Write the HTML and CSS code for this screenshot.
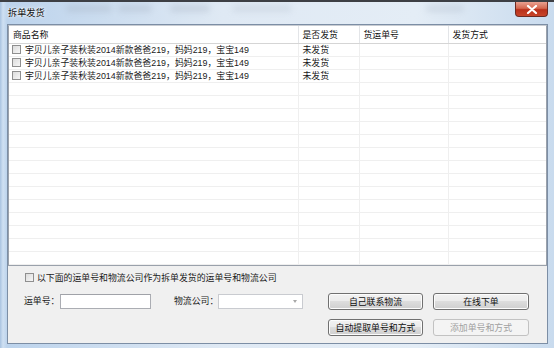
FILE: index.html
```html
<!DOCTYPE html>
<html lang="zh-CN">
<head>
    <meta charset="UTF-8">
    <title>拆单发货</title>
    <link rel="stylesheet" href="styles.css">
</head>
<body>

<div class="window">

    <!-- 标题栏 (Aero 玻璃) -->
    <div class="titlebar">
        <span class="smudge s1"></span>
        <span class="smudge s2"></span>
        <span class="smudge s3"></span>
        <span class="smudge s4"></span>
        <span class="smudge s5"></span>
        <span class="title">拆单发货</span>
        <span class="close">
            <svg width="12" height="9" viewBox="0 0 12 9">
                <path d="M2 1 L10 8 M10 1 L2 8" stroke="#fff" stroke-width="2.2" stroke-linecap="round"/>
            </svg>
        </span>
    </div>

    <div class="client">

        <!-- 商品列表 -->
        <div class="list">
            <table>
                <colgroup>
                    <col class="c1"><col class="c2"><col class="c3"><col class="c4">
                </colgroup>
                <thead>
                    <tr><th>商品名称</th><th>是否发货</th><th>货运单号</th><th>发货方式</th></tr>
                </thead>
                <tbody>
                    <tr><td><span class="box"></span>宇贝儿亲子装秋装2014新款爸爸219，妈妈219，宝宝149</td><td>未发货</td><td></td><td></td></tr>
                    <tr><td><span class="box"></span>宇贝儿亲子装秋装2014新款爸爸219，妈妈219，宝宝149</td><td>未发货</td><td></td><td></td></tr>
                    <tr><td><span class="box"></span>宇贝儿亲子装秋装2014新款爸爸219，妈妈219，宝宝149</td><td>未发货</td><td></td><td></td></tr>
                    <tr><td></td><td></td><td></td><td></td></tr>
                    <tr><td></td><td></td><td></td><td></td></tr>
                    <tr><td></td><td></td><td></td><td></td></tr>
                    <tr><td></td><td></td><td></td><td></td></tr>
                    <tr><td></td><td></td><td></td><td></td></tr>
                    <tr><td></td><td></td><td></td><td></td></tr>
                    <tr><td></td><td></td><td></td><td></td></tr>
                    <tr><td></td><td></td><td></td><td></td></tr>
                    <tr><td></td><td></td><td></td><td></td></tr>
                    <tr><td></td><td></td><td></td><td></td></tr>
                    <tr><td></td><td></td><td></td><td></td></tr>
                    <tr><td></td><td></td><td></td><td></td></tr>
                    <tr><td></td><td></td><td></td><td></td></tr>
                    <tr><td></td><td></td><td></td><td></td></tr>
                    <tr><td></td><td></td><td></td><td></td></tr>
                </tbody>
            </table>
        </div>

        <!-- 下方操作区 -->
        <div class="panel">
            <div class="check-line"><span class="box"></span>以下面的运单号和物流公司作为拆单发货的运单号和物流公司</div>

            <div class="controls">
                <span class="label lbl-no">运单号：</span>
                <span class="input"></span>
                <span class="label lbl-co">物流公司：</span>
                <span class="combo"><span class="arrow"></span></span>

                <div class="buttons">
                    <button class="btn">自己联系物流</button>
                    <button class="btn">在线下单</button>
                    <button class="btn">自动提取单号和方式</button>
                    <button class="btn" disabled>添加单号和方式</button>
                </div>
            </div>
        </div>

    </div>
</div>

</body>
</html>
```

FILE: styles.css
```css
html, body {
    margin: 0;
    padding: 0;
}

body {
    width: 554px;
    height: 348px;
    overflow: hidden;
    font-family: "Liberation Sans", "Noto Sans CJK SC", sans-serif;
    font-size: 8.9px;
    color: #1a1a1a;
}

/* 整个窗口: 玻璃边框 */
.window {
    width: 554px;
    height: 348px;
    box-sizing: border-box;
    border-top: 2px solid #3d3f44;
    background: linear-gradient(90deg, #a9c3e0 0px, #cfe0f2 3px, #bcd3ec 7px, #dfe9f4 40%, #e4edf6 75%, #c9dbee 100%);
    display: flex;
    flex-direction: column;
}

/* 标题栏 */
.titlebar {
    position: relative;
    height: 22px;
    display: flex;
    align-items: flex-start;
    overflow: hidden;
}

.title {
    margin: 5px 0 0 8px;
    font-size: 9.2px;
    line-height: 12px;
    color: #111;
    text-shadow: 0 0 4px #fff, 0 0 2px #fff;
    position: relative;
}

/* 背后窗口透出来的模糊影子 */
.smudge {
    position: absolute;
    top: 3px;
    height: 7px;
    border-radius: 4px;
    background: #9aa6b6;
    filter: blur(3px);
    opacity: 0.3;
}
.s1 { left: 66px; width: 46px; }
.s2 { left: 118px; width: 34px; }
.s3 { left: 170px; width: 40px; }
.s4 { left: 232px; width: 60px; opacity: 0.2; }
.s5 { left: 426px; width: 38px; opacity: 0.25; }

.close {
    margin: 0 6px 0 auto;
    width: 33px;
    height: 15px;
    box-sizing: border-box;
    border: 1px solid #6d2a22;
    border-top: none;
    border-radius: 0 0 4px 4px;
    background: linear-gradient(#e9a191 0%, #d4674f 45%, #b9301b 55%, #c8452a 100%);
    display: flex;
    align-items: center;
    justify-content: center;
    position: relative;
}

/* 客户区 */
.client {
    margin: 0 6px 0 7px;
    height: 320px;
    box-sizing: border-box;
    border: 1px solid #7c8ea5;
    background: #f0f0f0;
    display: flex;
    flex-direction: column;
}

/* 列表 */
.list {
    height: 241px;
    box-sizing: border-box;
    border: 1px solid #9aa1ab;
    border-top-color: #c8ccd2;
    background: #fff;
    overflow: hidden;
}

table {
    width: 100%;
    border-collapse: collapse;
    table-layout: fixed;
}

.c1 { width: 289px; }
.c2 { width: 61px; }
.c3 { width: 89px; }

th {
    height: 17px;
    padding: 0 0 0 4px;
    text-align: left;
    font-weight: normal;
    border-right: 1px solid #e3e5e8;
    border-bottom: 1px solid #d5d5d5;
    color: #111;
}
th:last-child { border-right: none; }

td {
    height: 12px;
    padding: 0 0 0 4px;
    line-height: 12px;
    border-right: 1px solid #efefef;
    border-bottom: 1px solid #efefef;
    white-space: nowrap;
    overflow: hidden;
}
td:first-child { padding-left: 3px; }
td:last-child { border-right: none; }

/* 复选框 */
.box {
    display: inline-block;
    width: 7px;
    height: 7px;
    margin-right: 4px;
    vertical-align: -1px;
    border: 1px solid #8f8f8f;
    background: linear-gradient(135deg, #dcdcdc, #f6f6f6);
}

/* 下方操作区 */
.panel {
    flex: 1;
    padding: 7px 0 0 0;
}

.check-line {
    height: 11px;
    line-height: 11px;
    padding-left: 17px;
    white-space: nowrap;
}
.check-line .box {
    margin-right: 3px;
}

.controls {
    margin-top: 9px;
    display: flex;
    align-items: flex-start;
}

.label {
    height: 17px;
    line-height: 17px;
    flex: none;
    white-space: nowrap;
}
.lbl-no { margin-left: 16px; width: 36px; }
.lbl-co { margin-left: 23px; width: 44px; }

.input {
    flex: none;
    margin-top: 1px;
    width: 91px;
    height: 15px;
    box-sizing: border-box;
    border: 1px solid #abadb3;
    border-top-color: #a0a2a8;
    background: #fff;
}

.combo {
    flex: none;
    margin-top: 1px;
    width: 85px;
    height: 15px;
    box-sizing: border-box;
    border: 1px solid #c9cbd0;
    background: #fff;
    position: relative;
}
.arrow {
    position: absolute;
    right: 5px;
    top: 5px;
    border-left: 2.5px solid transparent;
    border-right: 2.5px solid transparent;
    border-top: 3px solid #a8a8a8;
}

.buttons {
    margin-left: 25px;
    display: grid;
    grid-template-columns: 95px 96px;
    grid-auto-rows: 17px;
    column-gap: 10px;
    row-gap: 9px;
}

.btn {
    margin: 0;
    padding: 0;
    font-family: inherit;
    font-size: 8.9px;
    color: #111;
    border: 1px solid #707070;
    border-radius: 3px;
    background: linear-gradient(#f2f2f2 0%, #ebebeb 50%, #dddddd 50%, #cfcfcf 100%);
    box-shadow: inset 0 0 0 1px #fcfcfc;
}

.btn:disabled {
    color: #a0a0a0;
    border-color: #c2c2c2;
    background: #f4f4f4;
    box-shadow: none;
}
```
